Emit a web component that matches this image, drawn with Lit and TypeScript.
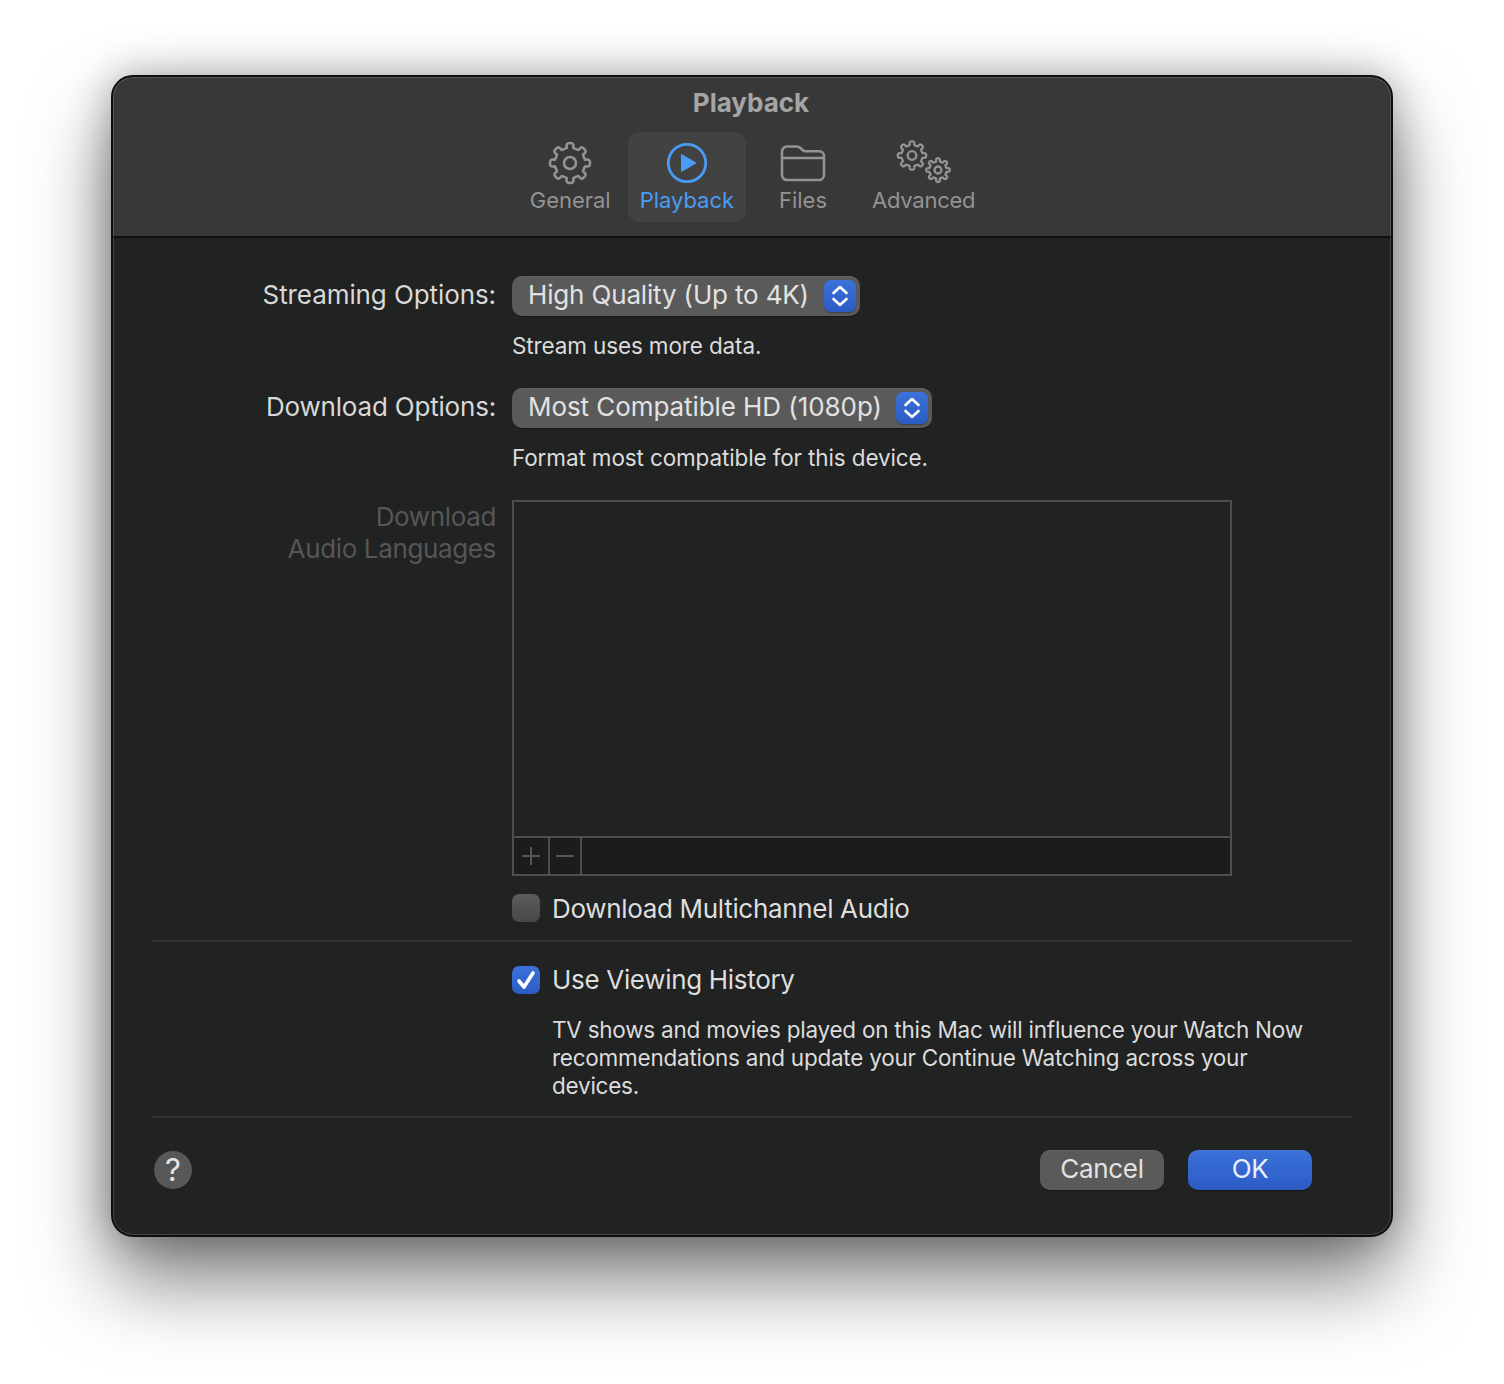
import { LitElement, html, css, svg } from "lit";
import { customElement } from "lit/decorators.js";

function gear(cx: number, cy: number, ro: number, ri: number, teeth: number) {
  const pts: string[] = [];
  const step = (Math.PI * 2) / teeth;
  for (let i = 0; i < teeth; i++) {
    const a = i * step - Math.PI / 2;
    const p = (r: number, d: number) =>
      `${(cx + r * Math.cos(a + d * step)).toFixed(2)} ${(cy + r * Math.sin(a + d * step)).toFixed(2)}`;
    pts.push(
      `${i ? "L" : "M"}${p(ri, -0.27)}`,
      `C${p(ro * 0.95, -0.25)} ${p(ro * 1.02, -0.24)} ${p(ro * 1.02, -0.1)}`,
      `Q${p(ro * 1.04, 0)} ${p(ro * 1.02, 0.1)}`,
      `C${p(ro * 1.02, 0.24)} ${p(ro * 0.95, 0.25)} ${p(ri, 0.27)}`,
      `Q${p(ri * 0.96, 0.5)} ${p(ri, 0.73)}`
    );
  }
  return pts.join(" ") + "Z";
}

const stepper = html`<span class="stepper"><svg width="18" height="24" viewBox="0 0 18 24" fill="none" stroke="#fff" stroke-width="2.6" stroke-linecap="round" stroke-linejoin="round"><path d="M2.500 9 9 3l6.500 6M2.500 15 9 21l6.500-6"/></svg></span>`;

@customElement("app-root")
export class AppRoot extends LitElement {
  static styles = css`
    :host { display: block; width: 1504px; height: 1384px; background: #fff; font-family: Inter, "Liberation Sans", sans-serif; color: #dedede; }
    * { box-sizing: border-box; }
    .page { padding: 75px 111px; height: 1384px; }
    .win { width: 1282px; height: 1162px; border-radius: 22px; background: #212222; border: 2px solid #0e0e0e; overflow: hidden; display: flex; flex-direction: column; box-shadow: 0 44px 80px rgba(0,0,0,.5), 0 0 40px rgba(0,0,0,.3); position: relative; }
    .win::after { content: ""; position: absolute; inset: 0; border-radius: 20px; box-shadow: inset 0 0 0 1px rgba(255,255,255,.16); pointer-events: none; }
    header { height: 161px; background: #383838; border-bottom: 2px solid #0f0f0f; display: flex; flex-direction: column; align-items: center; flex: none; }
    h1 { margin: 9px 0 0; height: 34px; font-size: 26px; line-height: 34px; font-weight: 700; color: #a5a5a5; transform: translateX(-1px); }
    .tabs { display: flex; gap: 5px; margin: 12px 0 0 1px; }
    .tab { height: 90px; padding: 0 12px; border-radius: 12px; display: flex; flex-direction: column; align-items: center; color: #939393; font-size: 22px; line-height: 28px; letter-spacing: -.02px; white-space: nowrap; }
    .tab.adv { letter-spacing: -.25px; }
    .tab svg { display: block; height: 48px; margin-top: 8px; margin-bottom: -2px; flex: none; }
    .tab.on { background: #424242; color: #4a9bf5; }
    .tab.files { min-width: 104px; }
    main { flex: 1; padding: 38px 39px 0; display: flex; flex-direction: column; }
    .row { display: grid; grid-template-columns: 344px 1fr; column-gap: 16px; }
    .lbl { font-size: 26px; line-height: 38px; text-align: right; color: #d8d8d8; white-space: nowrap; }
    .lbl.s { letter-spacing: -.09px; }
    .lbl.d { letter-spacing: -.19px; }
    .lbl.off { color: #565656; line-height: 32px; letter-spacing: -.36px; padding-top: 1px; }
    .popup { display: inline-flex; align-items: center; height: 40px; border-radius: 10px; background: #5a5a5a; padding: 0 4px 0 16px; font-size: 26px; color: #e2e2e2; white-space: nowrap; box-shadow: 0 1px 1px rgba(0,0,0,.3), inset 0 1px 0 rgba(255,255,255,.06); }
    .popup.s { letter-spacing: -.16px; gap: 15px; }
    .popup.d { letter-spacing: -.07px; gap: 14px; }
    .pt { margin-top: -4px; }
    .stepper { width: 32px; height: 32px; border-radius: 7px; background: linear-gradient(#3b71da, #2b5cc4); display: flex; align-items: center; justify-content: center; box-shadow: 0 1px 1px rgba(0,0,0,.25); }
    .hint { font-size: 22.5px; line-height: 28px; color: #dcdcdc; margin-top: 16px; letter-spacing: -.13px; white-space: nowrap; }
    .r2 { margin-top: 28px; }
    .r3 { margin-top: 28px; }
    .list { width: 720px; height: 376px; border: 2px solid #4e4e4e; display: flex; flex-direction: column; }
    .list .body { flex: 1; }
    .foot { height: 38px; flex: none; background: #1c1c1d; border-top: 2px solid #4e4e4e; display: flex; }
    .foot span { width: 36px; height: 36px; border-right: 2px solid #4e4e4e; display: flex; align-items: center; justify-content: center; }
    .foot span + span { width: 32px; }
    .check { display: flex; align-items: center; gap: 12px; font-size: 26px; line-height: 28px; color: #dedede; letter-spacing: -.32px; white-space: nowrap; }
    .box { width: 28px; height: 28px; border-radius: 7px; flex: none; background: linear-gradient(#5c5c5c, #474747); display: flex; align-items: center; justify-content: center; }
    .box.on { background: linear-gradient(#3b71da, #2b5cc4); }
    .c1 { margin-top: 18px; }
    .tx { margin: 1px 0 -1px; }
    hr { border: 0; height: 2px; background: #333434; margin: 0; flex: none; }
    .h1 { margin-top: 18px; }
    .c2 { margin-top: 24px; }
    .desc { margin: 22px 0 0 40px; width: 770px; font-size: 22.5px; line-height: 28px; color: #dcdcdc; letter-spacing: -.24px; }
    .h2 { margin-top: 16px; }
    .foot2 { display: flex; align-items: center; justify-content: space-between; padding: 0 40px 0 2px; margin-top: 32px; }
    .help { width: 38px; height: 38px; border-radius: 50%; background: #585858; color: #e4e4e4; font-size: 31px; line-height: 38px; text-align: center; }
    .btns { display: flex; gap: 24px; }
    .btn { width: 124px; height: 40px; border-radius: 10px; font-size: 26px; line-height: 38px; text-align: center; color: #e2e2e2; background: #5a5a5a; letter-spacing: -.3px; box-shadow: 0 1px 1px rgba(0,0,0,.3), inset 0 1px 0 rgba(255,255,255,.06); }
    .btn.ok { background: linear-gradient(#3b71da, #2b5cc4); color: #eaf0fb; }
  `;

  render() {
    const stroke = "#939393";
    return html`<div class="page"><div class="win">
      <header>
        <h1>Playback</h1>
        <div class="tabs">
          <div class="tab">
            <svg width="44" height="48" viewBox="0 0 44 48" fill="none" stroke="${stroke}" stroke-width="2.6" stroke-linejoin="round">
              ${svg`<path d="${gear(22, 23, 19.5, 15.5, 8)}"/><circle cx="22" cy="23" r="6"/>`}
            </svg>General
          </div>
          <div class="tab on">
            <svg width="42" height="48" viewBox="0 0 42 48" fill="none">
              <circle cx="21" cy="23" r="18.7" stroke="#4a9bf5" stroke-width="2.8"/>
              <path d="M15.500 14.500v17l14.500-8.500z" fill="#4a9bf5" stroke="#4a9bf5" stroke-width="1" stroke-linejoin="round"/>
            </svg>Playback
          </div>
          <div class="tab files">
            <svg width="46" height="48" viewBox="0 0 46 48" fill="none" stroke="${stroke}" stroke-width="2.6" stroke-linejoin="round">
              <path d="M2 11.500a5 5 0 0 1 5-5h9.500c2 0 3 .7 4.200 1.800l1.800 1.700c1 .9 2 1.300 3.500 1.300H39a5 5 0 0 1 5 5V35a5 5 0 0 1-5 5H7a5 5 0 0 1-5-5Z"/>
              <path d="M2 18h42"/>
            </svg>Files
          </div>
          <div class="tab adv">
            <svg width="56" height="48" viewBox="0 0 56 48" fill="none" stroke="${stroke}" stroke-width="2.3" stroke-linejoin="round">
              ${svg`<path d="${gear(16, 15.500, 13.800, 10.800, 8)}"/><circle cx="16" cy="15.500" r="4.300"/>
              <path d="${gear(42, 30, 11.500, 8.800, 8)}"/><circle cx="42" cy="30" r="3.500"/>`}
            </svg>Advanced
          </div>
        </div>
      </header>
      <main>
        <div class="row">
          <div class="lbl s">Streaming Options:</div>
          <div>
            <div class="popup s"><span class="pt">High Quality (Up to 4K)</span>${stepper}</div>
            <div class="hint">Stream uses more data.</div>
          </div>
        </div>
        <div class="row r2">
          <div class="lbl d">Download Options:</div>
          <div>
            <div class="popup d"><span class="pt">Most Compatible HD (1080p)</span>${stepper}</div>
            <div class="hint">Format most compatible for this device.</div>
          </div>
        </div>
        <div class="row r3">
          <div class="lbl off">Download<br />Audio Languages</div>
          <div class="list">
            <div class="body"></div>
            <div class="foot">
              <span><svg width="18" height="18" viewBox="0 0 18 18" stroke="#565656" stroke-width="2"><path d="M9 0v18M0 9h18"/></svg></span>
              <span><svg width="18" height="18" viewBox="0 0 18 18" stroke="#565656" stroke-width="2"><path d="M0 9h18"/></svg></span>
            </div>
          </div>
        </div>
        <div class="row c1">
          <div></div>
          <label class="check"><span class="box"></span><span class="tx">Download Multichannel Audio</span></label>
        </div>
        <hr class="h1" />
        <div class="row c2">
          <div></div>
          <label class="check"><span class="box on"><svg width="22" height="22" viewBox="0 0 22 22" fill="none" stroke="#fff" stroke-width="3.600" stroke-linecap="round" stroke-linejoin="round"><path d="M4 12l5 6L18 4"/></svg></span>Use Viewing History</label>
        </div>
        <div class="row">
          <div></div>
          <p class="desc">TV shows and movies played on this Mac will influence your Watch Now recommendations and update your Continue Watching across your devices.</p>
        </div>
        <hr class="h2" />
        <div class="foot2">
          <div class="help">?</div>
          <div class="btns"><div class="btn">Cancel</div><div class="btn ok">OK</div></div>
        </div>
      </main>
    </div></div>`;
  }
}
